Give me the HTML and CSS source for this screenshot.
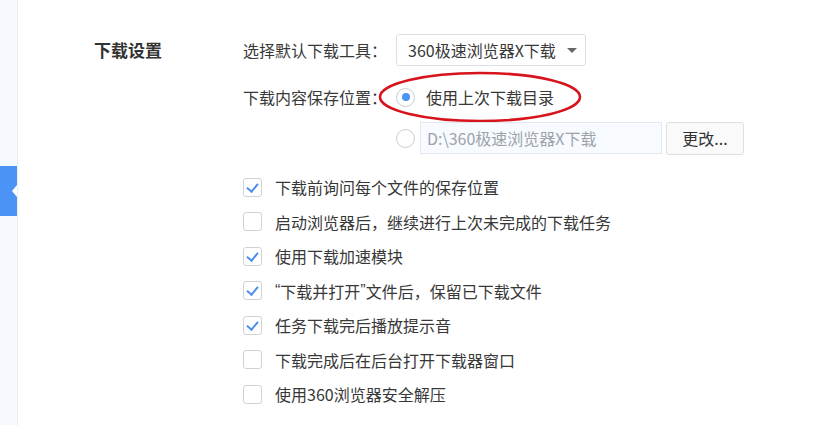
FILE: index.html
```html
<!DOCTYPE html>
<html lang="zh-CN">
<head>
<meta charset="utf-8">
<title>下载设置</title>
<link rel="stylesheet" href="styles.css">
</head>
<body>
<div class="page">
  <aside class="sidebar">
    <div class="tab"><span class="notch"></span></div>
  </aside>
  <main class="main">
    <section class="settings">
      <h2 class="title">下载设置</h2>
      <div class="body">
        <div class="row row-select">
          <span class="label">选择默认下载工具：</span>
          <div class="select">
            <span>360极速浏览器X下载</span>
            <span class="arrow"></span>
          </div>
        </div>
        <div class="row row-radio">
          <span class="label">下载内容保存位置：</span>
          <span class="radio checked"></span>
          <span class="radio-text">使用上次下载目录</span>
          <svg class="ring" width="210" height="56" viewBox="0 0 210 56">
            <ellipse cx="105" cy="28" rx="100" ry="24" fill="none" stroke="#d7141c" stroke-width="2.6"/>
          </svg>
        </div>
        <div class="row row-path">
          <span class="label"></span>
          <span class="radio"></span>
          <div class="path">D:\360极速浏览器X下载</div>
          <button class="btn">更改...</button>
        </div>
        <ul class="checks">
          <li><span class="box on"></span>下载前询问每个文件的保存位置</li>
          <li><span class="box"></span>启动浏览器后，继续进行上次未完成的下载任务</li>
          <li><span class="box on"></span>使用下载加速模块</li>
          <li><span class="box on"></span><span class="q">“</span>下载并打开<span class="q">”</span>文件后，保留已下载文件</li>
          <li><span class="box on"></span>任务下载完后播放提示音</li>
          <li><span class="box"></span>下载完成后在后台打开下载器窗口</li>
          <li><span class="box"></span>使用360浏览器安全解压</li>
        </ul>
      </div>
    </section>
  </main>
</div>
</body>
</html>
```

FILE: styles.css
```css
* { box-sizing: border-box; }
html, body {
  margin: 0;
  padding: 0;
  background: #fff;
  font-family: "Noto Sans CJK SC", "Noto Sans", sans-serif;
  color: #383838;
  font-size: 16px;
}
.page {
  display: flex;
  width: 831px;
  height: 425px;
  overflow: hidden;
}
.sidebar {
  width: 18px;
  flex: none;
  background: #f6f9fe;
  border-right: 1px solid #e9eef5;
  display: flex;
  flex-direction: column;
}
.tab {
  margin-top: 166px;
  width: 17px;
  height: 50px;
  background: #4b93f4;
  display: flex;
  align-items: center;
  justify-content: flex-end;
}
.notch {
  width: 0;
  height: 0;
  border-top: 6px solid transparent;
  border-bottom: 6px solid transparent;
  border-right: 5px solid #fff;
}
.main {
  flex: 1;
  padding: 34px 0 0 76px;
}
.settings {
  display: flex;
}
.title {
  margin: 0;
  width: 149px;
  flex: none;
  font-size: 17px;
  font-weight: bold;
  line-height: 32px;
  color: #333;
}
.body {
  display: flex;
  flex-direction: column;
}
.row {
  display: flex;
  align-items: center;
  height: 32px;
  position: relative;
}
.label {
  width: 153px;
  flex: none;
  white-space: nowrap;
}
.select {
  width: 190px;
  height: 32px;
  border: 1px solid #dcdfe4;
  border-radius: 3px;
  display: flex;
  align-items: center;
  justify-content: space-between;
  padding: 0 8px 0 11px;
  background: #fff;
}
.arrow {
  width: 0;
  height: 0;
  border-left: 5px solid transparent;
  border-right: 5px solid transparent;
  border-top: 5px solid #666;
}
.row-radio { margin-top: 15px; }
.row-path { margin-top: 9px; }
.radio {
  width: 19px;
  height: 19px;
  border: 1px solid #c9ccd1;
  border-radius: 50%;
  flex: none;
  display: flex;
  align-items: center;
  justify-content: center;
  background: #fff;
}
.radio.checked::after {
  content: "";
  width: 8px;
  height: 8px;
  border-radius: 50%;
  background: #4b93f4;
}
.radio-text { margin-left: 11px; }
.ring {
  position: absolute;
  left: 132px;
  top: -12px;
  pointer-events: none;
}
.path {
  margin-left: 5px;
  width: 242px;
  height: 32px;
  border: 1px solid #e3e8ef;
  background: #f7faff;
  color: #9ea3aa;
  display: flex;
  align-items: center;
  padding-left: 6px;
}
.btn {
  margin-left: 4px;
  width: 78px;
  height: 33px;
  border: 1px solid #dcdfe4;
  border-radius: 3px;
  background: #fafafa;
  font-family: inherit;
  font-size: 16px;
  color: #333;
  padding: 0;
}
.checks {
  list-style: none;
  margin: 16px 0 0;
  padding: 0;
}
.checks li {
  height: 34.5px;
  display: flex;
  align-items: center;
  white-space: nowrap;
}
.q {
  font-family: "Liberation Sans", sans-serif;
}
.box {
  width: 19px;
  height: 19px;
  border: 1px solid #cfd2d7;
  border-radius: 3px;
  margin-right: 13px;
  flex: none;
  position: relative;
  background: #fff;
}
.box.on::after {
  content: "";
  position: absolute;
  left: 5px;
  top: 2px;
  width: 5px;
  height: 9px;
  border-right: 2.5px solid #4b8ef0;
  border-bottom: 2.5px solid #4b8ef0;
  transform: rotate(40deg);
}
```
